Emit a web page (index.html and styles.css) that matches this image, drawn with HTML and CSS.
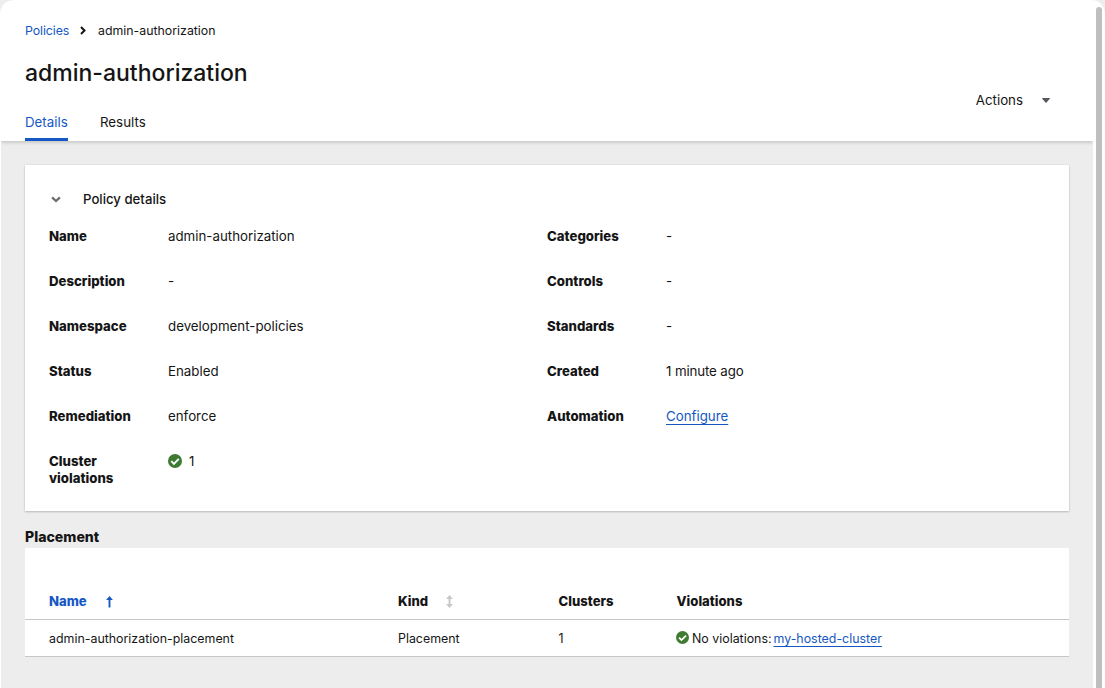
FILE: index.html
```html
<!DOCTYPE html>
<html lang="en">
<head>
<meta charset="utf-8">
<title>admin-authorization</title>
<link rel="stylesheet" href="styles.css">
</head>
<body>
<div class="shell">
  <div class="page">
    <header class="header">
      <div class="heading">
        <nav class="breadcrumb">
          <a class="crumb-link">Policies</a>
          <svg class="crumb-sep" width="6" height="9" viewBox="0 0 6 9"><path d="M1 1l3.5 3.5L1 8" fill="none" stroke="#151515" stroke-width="2"/></svg>
          <span>admin-authorization</span>
        </nav>
        <h1 class="title">admin-authorization</h1>
        <div class="tabs">
          <span class="tab tab-active">Details</span>
          <span class="tab">Results</span>
        </div>
      </div>
      <div class="actions">Actions
        <svg width="8" height="5" viewBox="0 0 8 5"><path d="M.5 0h7c.5 0 .6.5.3.8L4.5 4.6c-.3.4-.7.4-1 0L.2.8C-.1.5 0 0 .5 0z" fill="#55585d"/></svg>
      </div>
    </header>
    <main class="main">
      <section class="card">
        <div class="card-head">
          <svg width="10" height="7" viewBox="0 0 10 7"><path d="M1.1 1.3L5 5l3.9-3.7" fill="none" stroke="#6a6e73" stroke-width="2.3"/></svg>
          <span>Policy details</span>
        </div>
        <div class="columns">
          <dl class="list">
            <dt>Name</dt><dd>admin-authorization</dd>
            <dt>Description</dt><dd>-</dd>
            <dt>Namespace</dt><dd>development-policies</dd>
            <dt>Status</dt><dd>Enabled</dd>
            <dt>Remediation</dt><dd>enforce</dd>
            <dt>Cluster violations</dt>
            <dd class="status"><svg width="14" height="14" viewBox="0 0 14 14"><circle cx="7" cy="7" r="7" fill="#3e7b32"/><path d="M3.3 7.2l2.6 2.6 4.9-4.9" fill="none" stroke="#fff" stroke-width="1.9"/></svg>1</dd>
          </dl>
          <dl class="list">
            <dt>Categories</dt><dd>-</dd>
            <dt>Controls</dt><dd>-</dd>
            <dt>Standards</dt><dd>-</dd>
            <dt>Created</dt><dd class="created">1 minute ago</dd>
            <dt>Automation</dt><dd><a class="link">Configure</a></dd>
          </dl>
        </div>
      </section>
      <h2 class="section-title">Placement</h2>
      <div class="table">
        <div class="row row-head">
          <span class="sorted">Name
            <svg width="7" height="12" viewBox="0 0 7 12"><path d="M3.5 11.5V2" stroke="#1558c4" stroke-width="1.9"/><path d="M.1 3.9L3.5.1l3.4 3.8z" fill="#1558c4"/></svg>
          </span>
          <span class="sortable">Kind
            <svg width="7" height="13" viewBox="0 0 7 13"><path d="M3.5 2v9" stroke="#c7c7c7" stroke-width="1.9"/><path d="M.1 3.9L3.5.1l3.4 3.8zM.1 9.1l3.4 3.8 3.4-3.8z" fill="#c7c7c7"/></svg>
          </span>
          <span>Clusters</span>
          <span>Violations</span>
        </div>
        <div class="row">
          <span>admin-authorization-placement</span>
          <span>Placement</span>
          <span>1</span>
          <span class="violation"><svg width="13" height="13" viewBox="0 0 14 14"><circle cx="7" cy="7" r="7" fill="#3e7b32"/><path d="M3.3 7.2l2.6 2.6 4.9-4.9" fill="none" stroke="#fff" stroke-width="1.9"/></svg><span class="none">No violations:</span><a class="link">my-hosted-cluster</a></span>
        </div>
      </div>
    </main>
  </div>
  <div class="scroll"><div class="thumb"></div></div>
</div>
</body>
</html>
```
FILE: styles.css
```css
* { box-sizing: border-box; }
body {
  margin: 0;
  background: #ededed;
  color: #151515;
  font: 13.3px/17px Inter, "Liberation Sans", sans-serif;
}
h1, h2, dl, dd { margin: 0; }
svg { flex: none; }
.shell {
  display: flex;
  height: 688px;
  padding-left: 1px;
  background: #fff;
  border-radius: 14px 14px 0 0;
  overflow: hidden;
}
.page {
  display: flex;
  flex-direction: column;
  width: 1092px;
  background: #ededed;
  overflow: hidden;
}
.header {
  display: flex;
  justify-content: space-between;
  height: 141px;
  padding: 22px 43px 0 24px;
  background: #fff;
  box-shadow: 0 1px 4px rgba(3, 3, 3, .22);
}
.heading { display: flex; flex-direction: column; }
.breadcrumb {
  display: flex;
  align-items: center;
  font-size: 12.35px;
}
.crumb-link { width: 44px; color: #1558c4; letter-spacing: -.1px; }
.crumb-sep { margin: 0 12px 0 11px; }
.title {
  margin-top: 19px;
  font-size: 23px;
  font-weight: 500;
  line-height: 31px;
}
.tabs { display: flex; gap: 32px; margin-top: 25px; }
.tab { height: 27px; }
.tab-active { width: 43px; color: #1558c4; border-bottom: 3px solid #1558c4; }
.actions {
  display: flex;
  align-items: center;
  gap: 19px;
  height: 17px;
  margin-top: 70px;
}
.main { padding: 24px; }
.card {
  height: 346px;
  padding: 26px 24px 0;
  background: #fff;
  box-shadow: 0 1px 2px rgba(3, 3, 3, .2), 0 0 2px rgba(3, 3, 3, .08);
}
.card-head {
  display: flex;
  align-items: center;
  gap: 22px;
  padding-left: 2px;
  font-size: 13.2px;
  font-weight: 500;
}
.columns { display: grid; grid-template-columns: 498px 1fr; margin-top: 20px; }
.list {
  display: grid;
  grid-template-columns: 95px 1fr;
  gap: 28px 24px;
  align-content: start;
}
.list dt { font-size: 13.2px; font-weight: 800; }
.status { display: flex; gap: 7px; height: 16px; align-items: center; }
.created { letter-spacing: -.12px; }
.link {
  color: #1558c4;
  text-decoration: underline;
  text-decoration-thickness: 1px;
  text-underline-offset: 3px;
}
.section-title {
  margin-top: 16px;
  margin-bottom: 1px;
  font-size: 14.1px;
  font-weight: 800;
  line-height: 20px;
}
.table { padding-top: 36px; background: #fff; }
.row {
  display: grid;
  grid-template-columns: 349px 160.5px 117px 1fr;
  align-items: center;
  height: 37px;
  padding-left: 24px;
  border-bottom: 1px solid #c7c7c7;
  font-size: 12.4px;
}
.row-head {
  grid-template-columns: 349px 160.5px 118px 1fr;
  height: 36px;
  font-size: 13.1px;
  font-weight: 800;
}
.sorted, .sortable { display: flex; align-items: center; gap: 19px; }
.sortable { gap: 18px; }
.sorted { color: #1558c4; }
.violation { display: flex; align-items: center; }
.violation svg { margin-bottom: 1px; }
.none { width: 85px; padding-left: 3.5px; white-space: nowrap; }
.scroll { padding: 7px 0 0 3px; }
.thumb { width: 6px; height: 100%; background: #bfbfbf; border-radius: 3px 3px 0 0; }
```
